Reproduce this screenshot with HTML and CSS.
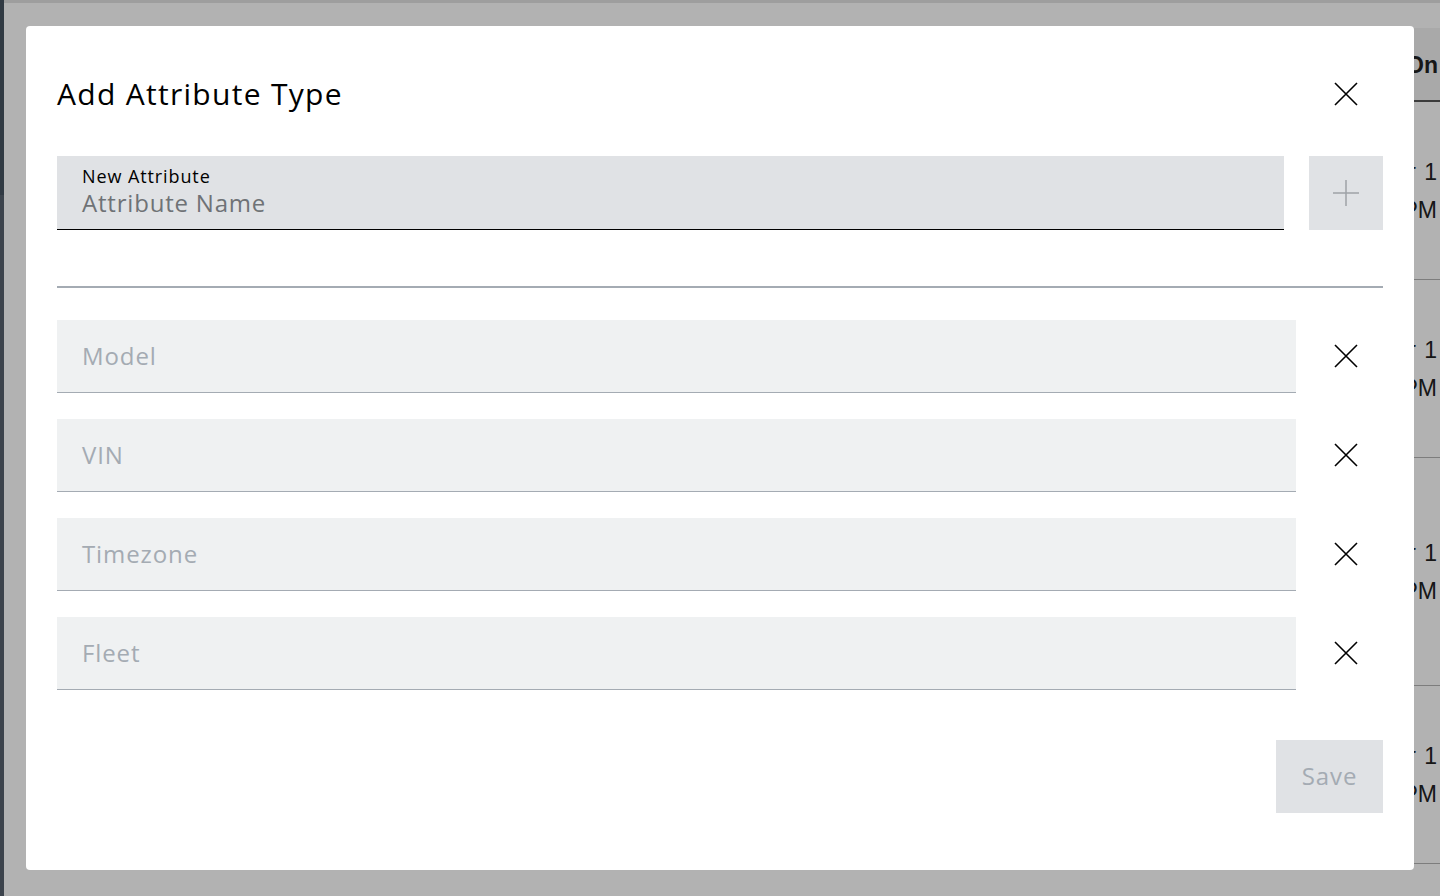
FILE: index.html
```html
<!DOCTYPE html>
<html lang="en">
<head>
<meta charset="utf-8">
<title>Add Attribute Type</title>
<link rel="stylesheet" href="styles.css">
</head>
<body>
<div class="page">
  <div class="sidebar"><div class="sb-top"></div><div class="sb-bottom"></div></div>
  <div class="content">
    <div class="topbar"></div>
    <div class="spacer"></div>
    <div class="table">
      <div class="thead"><div class="th">Created On</div></div>
      <div class="tr r1"><div class="td">Mar 1<br>2:30 PM</div></div>
      <div class="tr r2"><div class="td">Mar 1<br>2:31 PM</div></div>
      <div class="tr r3"><div class="td">Mar 1<br>2:32 PM</div></div>
      <div class="tr r4"><div class="td">Mar 1<br>2:33 PM</div></div>
    </div>
  </div>
</div>

<div class="overlay">
  <div class="modal">
    <div class="modal-header">
      <h1 class="title">Add Attribute Type</h1>
      <button class="icon-btn close" aria-label="Close">
        <svg width="24" height="24" viewBox="0 0 24 24"><path d="M1 1 L23 23 M23 1 L1 23" stroke="#000" stroke-width="1.6" fill="none"/></svg>
      </button>
    </div>

    <div class="new-row">
      <div class="field new-field">
        <div class="field-label">New Attribute</div>
        <div class="field-placeholder">Attribute Name</div>
      </div>
      <button class="add-btn" aria-label="Add">
        <svg width="26" height="26" viewBox="0 0 26 26"><path d="M13 0 V26 M0 13 H26" stroke="#9ea2a7" stroke-width="1.5" fill="none"/></svg>
      </button>
    </div>

    <div class="divider"></div>

    <div class="attr-list">
      <div class="attr-row">
        <div class="field attr-field">Model</div>
        <div class="attr-action"><svg width="24" height="24" viewBox="0 0 24 24"><path d="M1 1 L23 23 M23 1 L1 23" stroke="#000" stroke-width="1.6" fill="none"/></svg></div>
      </div>
      <div class="attr-row">
        <div class="field attr-field">VIN</div>
        <div class="attr-action"><svg width="24" height="24" viewBox="0 0 24 24"><path d="M1 1 L23 23 M23 1 L1 23" stroke="#000" stroke-width="1.6" fill="none"/></svg></div>
      </div>
      <div class="attr-row">
        <div class="field attr-field">Timezone</div>
        <div class="attr-action"><svg width="24" height="24" viewBox="0 0 24 24"><path d="M1 1 L23 23 M23 1 L1 23" stroke="#000" stroke-width="1.6" fill="none"/></svg></div>
      </div>
      <div class="attr-row">
        <div class="field attr-field">Fleet</div>
        <div class="attr-action"><svg width="24" height="24" viewBox="0 0 24 24"><path d="M1 1 L23 23 M23 1 L1 23" stroke="#000" stroke-width="1.6" fill="none"/></svg></div>
      </div>
    </div>

    <div class="footer">
      <button class="save-btn">Save</button>
    </div>
  </div>
</div>
</body>
</html>
```

FILE: styles.css
```css
* { box-sizing: border-box; }
html, body { margin: 0; padding: 0; }
body {
  width: 1440px;
  height: 896px;
  overflow: hidden;
  background: #ffffff;
  font-family: "Open Sans", "Noto Sans", sans-serif;
}

/* background page */
.page {
  display: flex;
  height: 896px;
}
.sidebar {
  width: 4px;
  display: flex;
  flex-direction: column;
  flex: none;
}
.sb-top { height: 195px; background: #475360; }
.sb-bottom { flex: 1; background: #56616e; }
.content {
  flex: 1;
  display: flex;
  flex-direction: column;
}
.topbar {
  height: 3px;
  background: #e2e2e2;
  flex: none;
}
.spacer { height: 25px; }
.table {
  margin-left: 1100px;
  display: flex;
  flex-direction: column;
  font-family: "Liberation Sans", Arial, sans-serif;
  font-size: 23px;
  color: #222;
}
.thead {
  height: 74px;
  background: #f3f3f3;
  border-bottom: 2px solid #565656;
  display: flex;
  align-items: center;
  justify-content: flex-end;
}
.th {
  font-weight: bold;
  padding-right: 2px;
  padding-top: 2px;
}
.tr {
  display: flex;
  align-items: center;
  justify-content: flex-end;
  border-bottom: 1px solid #b4b4b4;
}
.r1 { height: 178px; }
.r2 { height: 178px; }
.r3 { height: 228px; }
.r4 { height: 178px; }
.td {
  text-align: right;
  line-height: 38px;
  padding-right: 3px;
  word-spacing: 2px;
}

/* overlay + modal */
.overlay {
  position: fixed;
  inset: 0;
  background: rgba(0, 0, 0, 0.3);
  padding: 26px;
  display: flex;
}
.modal {
  flex: 1;
  background: #ffffff;
  border-radius: 4px;
  padding: 32px 31px 0 31px;
  display: flex;
  flex-direction: column;
}
.modal-header {
  height: 72px;
  display: flex;
  align-items: center;
  justify-content: space-between;
}
.title {
  margin: 0;
  font-size: 30px;
  font-weight: 400;
  letter-spacing: 1.3px;
  color: #000;
  line-height: 40px;
}
.icon-btn {
  border: 0;
  background: none;
  padding: 0;
  margin-right: 25px;
  width: 24px;
  height: 24px;
  display: flex;
}

.new-row {
  margin-top: 26px;
  display: flex;
  gap: 25px;
  height: 74px;
}
.field {
  flex: 1;
  padding-left: 25px;
}
.new-field {
  background: #e0e2e5;
  border-bottom: 1px solid #000;
  padding-top: 8px;
}
.field-label {
  font-size: 18px;
  line-height: 24px;
  letter-spacing: 0.9px;
  color: #000;
}
.field-placeholder {
  font-size: 24px;
  line-height: 30px;
  letter-spacing: 0.8px;
  color: #6f7276;
}
.add-btn {
  width: 74px;
  height: 74px;
  border: 0;
  background: #e0e2e5;
  padding: 0;
  display: flex;
  align-items: center;
  justify-content: center;
}

.divider {
  margin-top: 56px;
  height: 1.5px;
  background: #a4abb3;
}

.attr-list {
  margin-top: 32px;
  display: flex;
  flex-direction: column;
  gap: 26px;
}
.attr-row {
  display: flex;
  height: 73px;
}
.attr-field {
  background: #eff1f2;
  border-bottom: 1.5px solid #a4abb3;
  display: flex;
  align-items: center;
  font-size: 24px;
  letter-spacing: 0.9px;
  color: #a4abb3;
  padding-bottom: 1px;
}
.attr-action {
  width: 87px;
  display: flex;
  align-items: center;
  justify-content: flex-end;
  padding-right: 25px;
}

.footer {
  margin-top: 50px;
  display: flex;
  justify-content: flex-end;
}
.save-btn {
  width: 107px;
  height: 73px;
  border: 0;
  background: #e0e2e5;
  color: #a4abb3;
  font-family: "Open Sans", "Noto Sans", sans-serif;
  font-size: 24px;
  letter-spacing: 0.9px;
  padding: 0 0 1px 0;
}
```
